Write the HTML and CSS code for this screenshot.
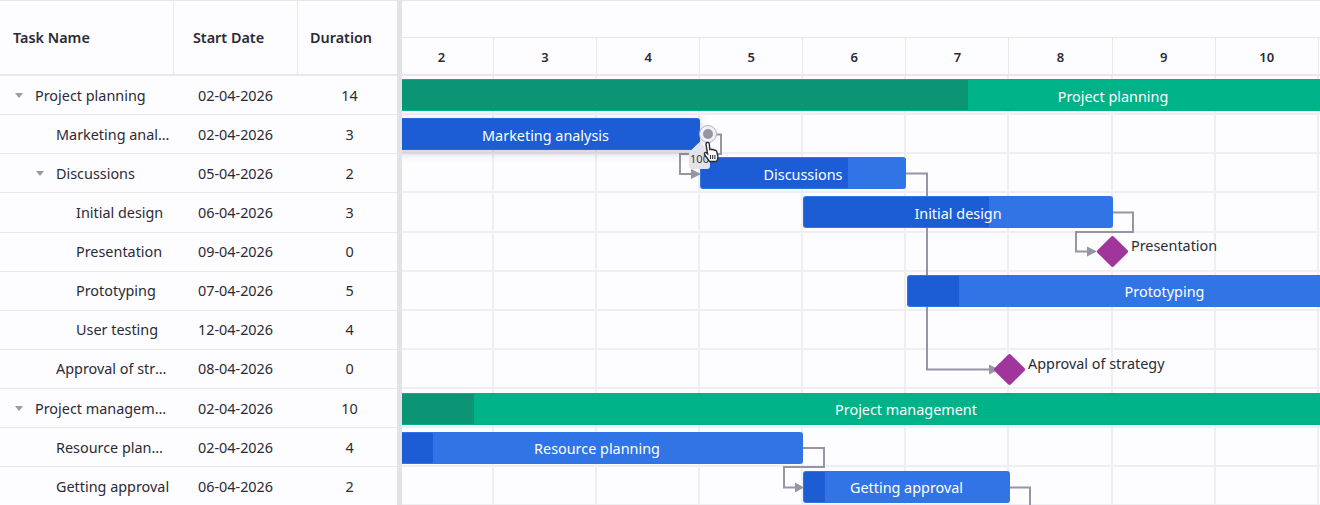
FILE: index.html
```html
<!DOCTYPE html>
<html lang="en">
<head>
<meta charset="utf-8">
<title>Gantt</title>
<link rel="stylesheet" href="styles.css">
</head>
<body>
<div class="gantt">
  <section class="grid">
    <div class="grid-head">
      <div class="th th-name">Task Name</div>
      <div class="th th-date">Start Date</div>
      <div class="th th-dur">Duration</div>
    </div>
    <div class="row"><div class="c-name l0"><span class="caret"></span><span class="txt">Project planning</span></div><div class="c-date">02-04-2026</div><div class="c-dur">14</div></div>
    <div class="row"><div class="c-name l1"><span class="txt">Marketing analysis</span></div><div class="c-date">02-04-2026</div><div class="c-dur">3</div></div>
    <div class="row"><div class="c-name l1c"><span class="caret"></span><span class="txt">Discussions</span></div><div class="c-date">05-04-2026</div><div class="c-dur">2</div></div>
    <div class="row"><div class="c-name l2"><span class="txt">Initial design</span></div><div class="c-date">06-04-2026</div><div class="c-dur">3</div></div>
    <div class="row"><div class="c-name l2"><span class="txt">Presentation</span></div><div class="c-date">09-04-2026</div><div class="c-dur">0</div></div>
    <div class="row"><div class="c-name l2"><span class="txt">Prototyping</span></div><div class="c-date">07-04-2026</div><div class="c-dur">5</div></div>
    <div class="row"><div class="c-name l2"><span class="txt">User testing</span></div><div class="c-date">12-04-2026</div><div class="c-dur">4</div></div>
    <div class="row"><div class="c-name l1"><span class="txt">Approval of strategy</span></div><div class="c-date">08-04-2026</div><div class="c-dur">0</div></div>
    <div class="row"><div class="c-name l0"><span class="caret"></span><span class="txt">Project management</span></div><div class="c-date">02-04-2026</div><div class="c-dur">10</div></div>
    <div class="row"><div class="c-name l1"><span class="txt">Resource planning</span></div><div class="c-date">02-04-2026</div><div class="c-dur">4</div></div>
    <div class="row"><div class="c-name l1"><span class="txt">Getting approval</span></div><div class="c-date">06-04-2026</div><div class="c-dur">2</div></div>
  </section>
  <div class="splitter"></div>
  <section class="chart">
    <div class="tl-top"></div>
    <div class="tl-days">
      <div class="day day-first">2</div><div class="day">3</div><div class="day">4</div><div class="day">5</div><div class="day">6</div><div class="day">7</div><div class="day">8</div><div class="day">9</div><div class="day">10</div>
    </div>
    <div class="canvas">
      <div class="vlines"><i class="vl-first"></i><i></i><i></i><i></i><i></i><i></i><i></i><i></i><i></i></div>
      <div class="hlines"><i></i><i></i><i></i><i></i><i></i><i></i><i></i><i></i><i></i><i></i><i></i></div>

      <svg class="links" width="918" height="429" viewBox="0 0 918 429" aria-hidden="true">
        <g class="link">
          <path d="M298 58.500H319V78H278V98H290"/>
          <path d="M504 97.500H525V293.500H588"/>
          <path d="M710 136.500H731V156H674V175.500H688"/>
          <path d="M401 372H422V391H382V411.500H394"/>
          <path d="M607 411.500H628V429"/>
        </g>
        <g class="arrow">
          <path d="M289 93L299 98L289 103Z"/>
          <path d="M587 288.500L597 293.500L587 298.500Z"/>
          <path d="M685 170.500L695 175.500L685 180.500Z"/>
          <path d="M393 406.500L402 411.500L393 416.500Z"/>
        </g>
      </svg>

      <div class="bar sum b1"><div class="prog"></div><span class="lbl">Project planning</span></div>
      <div class="bar task sel b2"><div class="prog full"></div><span class="lbl">Marketing analysis</span></div>
      <div class="bar task b3"><div class="prog"></div><span class="lbl">Discussions</span></div>
      <div class="bar task b4"><div class="prog"></div><span class="lbl">Initial design</span></div>
      <div class="bar task b5"><div class="prog"></div><span class="lbl">Prototyping</span></div>
      <div class="bar sum b6"><div class="prog"></div><span class="lbl">Project management</span></div>
      <div class="bar task b7"><div class="prog"></div><span class="lbl">Resource planning</span></div>
      <div class="bar task b8"><div class="prog"></div><span class="lbl">Getting approval</span></div>

      <div class="diamond d1"></div><span class="mlabel m1">Presentation</span>
      <div class="diamond d2"></div><span class="mlabel m2">Approval of strategy</span>

      <div class="tip">100</div>
      <div class="handle"><span></span></div>
      <svg class="cursor" width="20" height="22" viewBox="0 0 20 22" aria-hidden="true">
        <path d="M5 1.500C6.200 1 7.200 1.800 7.300 3L7.800 8.500C8.600 8 9.600 8 10 8.800C10.800 8.200 11.900 8.400 12.300 9.300C13.200 8.900 14.300 9.300 14.600 10.300L15.800 15C16.200 17 15.500 19 14.500 20.500H7.500L2.500 13.500C1.800 12.300 3 11 4.300 11.700L5.600 12.800L4 3.300C3.900 2.500 4.300 1.800 5 1.500Z" fill="#fff" stroke="#2b2b33" stroke-width="1.400"/>
        <path d="M8.500 14V18M10.700 14V18M12.900 14V18" stroke="#2b2b33" stroke-width="1.100"/>
      </svg>
    </div>
  </section>
</div>
</body>
</html>
```
FILE: styles.css
```css
* { box-sizing: border-box; }
html, body { margin: 0; height: 505px; overflow: hidden; background: #fdfcff; }
body { font-family: "Noto Sans", "Open Sans", sans-serif; font-size: 14.400px; color: #2b2b35; }
.gantt { display: flex; width: 1320px; height: 505px; overflow: hidden; border-top: 1px solid #e6e5ea; }

.grid { width: 397px; flex: none; }
.grid-head { display: flex; height: 75px; border-bottom: 2px solid #e8e7ec; }
.th { display: flex; align-items: center; font-weight: 600; font-size: 14.400px; color: #2b2b35; }
.th-name { width: 174px; padding-left: 13px; border-right: 1px solid #e8e7ec; }
.th-date { width: 124px; justify-content: center; border-right: 1px solid #e8e7ec; padding-right: 14px; }
.th-dur { flex: 1; justify-content: center; padding-right: 13px; }

.row { display: flex; align-items: center; height: 39.130px; border-bottom: 1.500px solid #e8e7ec; }
.c-name { width: 174px; display: flex; align-items: center; min-width: 0; }
.txt { white-space: nowrap; overflow: hidden; text-overflow: ellipsis; min-width: 0; }
.l0 { padding-left: 15px; padding-right: 5px; }
.l1 { padding-left: 56px; padding-right: 4px; }
.l1c { padding-left: 36px; padding-right: 5px; }
.l2 { padding-left: 76px; padding-right: 5px; }
.caret { flex: none; width: 0; height: 0; margin-right: 12px; border-left: 4.500px solid transparent; border-right: 4.500px solid transparent; border-top: 5px solid #9a99a6; }
.c-date { width: 124px; text-align: center; padding-right: 1px; }
.c-dur { flex: 1; text-align: center; padding-left: 4px; }

.splitter { width: 5px; flex: none; background: #e3e2e7; }

.chart { flex: 1; min-width: 0; display: flex; flex-direction: column; overflow: hidden; }
.tl-top { height: 37px; flex: none; border-bottom: 1px solid #e8e7ec; }
.tl-days { height: 38px; flex: none; display: flex; border-bottom: 2px solid #e8e7ec; }
.day { width: 103.100px; flex: none; display: flex; align-items: center; justify-content: center; font-size: 13px; font-weight: 600; border-right: 1px solid #e8e7ec; padding-top: 1px; }
.day-first { width: 92px; padding-right: 12px; }

.canvas { position: relative; flex: 1; min-height: 0; }
.vlines { position: absolute; inset: 0; display: flex; }
.vlines i { width: 103.100px; flex: none; border-right: 2px solid #efeef2; }
.vlines .vl-first { width: 92px; }
.hlines { position: absolute; inset: 0; }
.hlines i { display: block; height: 39.130px; border-bottom: 2px solid #efeef2; }

.links { position: absolute; left: 0; top: 0; overflow: visible; }
.link path { fill: none; stroke: #9695a3; stroke-width: 2; }
.arrow path { fill: #9695a3; }

.bar { position: absolute; height: 32px; border-radius: 3px; overflow: hidden; display: flex; align-items: center; justify-content: center; color: #fff; font-size: 14.400px; }
.lbl { position: relative; white-space: nowrap; }
.prog { position: absolute; left: 1px; top: 1px; bottom: 1px; border-radius: 2px 0 0 2px; }
.prog.full { width: calc(100% - 1px); }
.sum { background: #00b288; border-radius: 0; }
.sum .prog { background: #0c9574; left: 0; border-radius: 0; }
.task { background: #3074e6; }
.task .prog { background: #1c5dd6; }
.sel { background: #2a68dd; box-shadow: 0 3px 8px rgba(60, 60, 80, 0.25); overflow: visible; }
.sel .prog { border-radius: 0 3px 3px 0; }

.b1 { left: 0; top: 3px; width: 918px; }
.b1 .prog { width: 566px; }
.b1 .lbl { left: 252px; top: 1px; }
.b2 { left: -11px; top: 42px; width: 309px; border-radius: 0 3px 3px 0; }
.b2 .lbl { top: 1px; }
.b3 { left: 298px; top: 81px; width: 206px; }
.b3 .prog { width: 147px; }
.b3 .lbl { top: 1px; }
.b4 { left: 401px; top: 120px; width: 310px; }
.b4 .prog { width: 185px; }
.b4 .lbl { top: 1px; }
.b5 { left: 505px; top: 199px; width: 413px; border-radius: 3px 0 0 3px; }
.b5 .prog { width: 51px; }
.b5 .lbl { left: 51px; }
.b6 { left: 0; top: 317px; width: 918px; }
.b6 .prog { width: 72px; }
.b6 .lbl { left: 45px; }
.b7 { left: -11px; top: 356px; width: 412px; border-radius: 0 3px 3px 0; }
.b7 .prog { width: 41px; }
.b8 { left: 401px; top: 395px; width: 207px; }
.b8 .prog { width: 21px; }

.diamond { position: absolute; width: 23px; height: 23px; background: #a0359c; transform: rotate(45deg); border-radius: 2px; }
.d1 { left: 699px; top: 164px; }
.d2 { left: 596px; top: 282px; }
.mlabel { position: absolute; white-space: nowrap; line-height: 20px; }
.m1 { left: 729px; top: 160px; }
.m2 { left: 626px; top: 278px; }

.handle { position: absolute; left: 297px; top: 49px; width: 18px; height: 18px; border-radius: 50%; background: #f1f0f4; border: 1px solid #b5b4bd; display: flex; align-items: center; justify-content: center; }
.handle span { width: 10px; height: 10px; border-radius: 50%; background: #9695a3; }
.tip { position: absolute; z-index: 0; left: 287px; top: 75px; width: 21px; height: 18px; background: #e4e3ea; border-radius: 3px; font-size: 11px; line-height: 16px; text-align: center; color: #3a3a44; white-space: nowrap; }
.tip::before { content: ""; position: absolute; left: 3px; top: -6px; width: 15px; height: 15px; background: #e4e3ea; transform: rotate(45deg); z-index: -1; }
.cursor { position: absolute; left: 300px; top: 65px; }
```
